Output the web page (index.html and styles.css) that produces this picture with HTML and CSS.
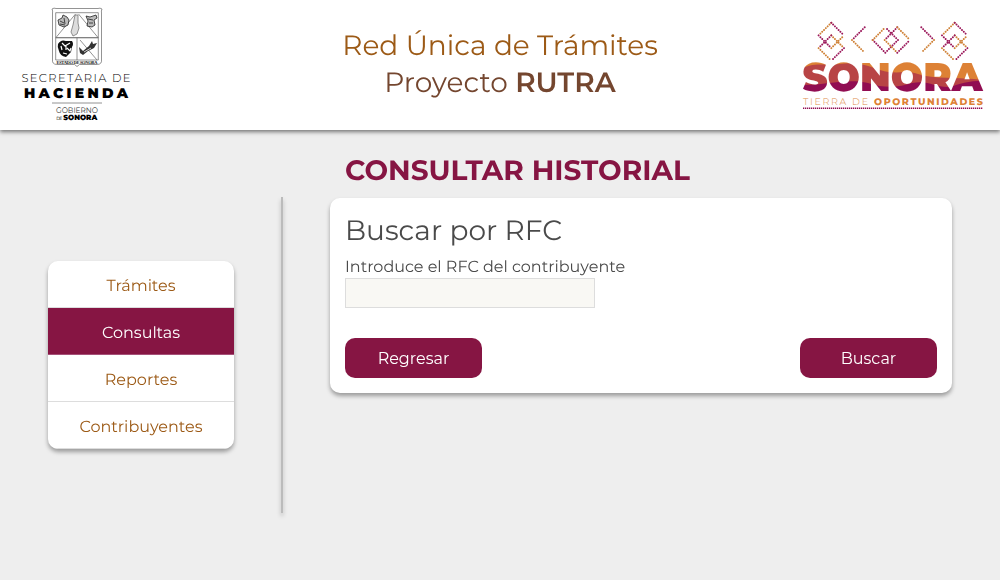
FILE: index.html
```html
<!DOCTYPE html>
<html lang="es">
<head>
<meta charset="utf-8">
<title>Red Única de Trámites</title>
<link rel="stylesheet" href="styles.css">
</head>
<body>
<header class="header">
  <svg class="logo-hacienda" viewBox="0 0 124 124" role="img" aria-label="Secretaria de Hacienda">
    <g fill="none" stroke="#666" stroke-width=".7">
      <path d="M42 9q2 -1.500 4 -.5h42q2 -1 4 .5q-1 2 -.5 4v47q.5 4 -4 4.500h-18l-2.500 2l-2.500 -2h-18q-4.500 -.5 -4 -4.500v-47q.5 -2 -.5 -4z"/>
      <path d="M45.700 12.700h42.600v25H45.700zM45.700 37.700h42.600V60H45.700zM46 37.500L65.500 14M88 37.500L68.500 14M67 37.700V60M70 40L87 60"/>
    </g>
    <g fill="#bbb" stroke="#222" stroke-width=".8">
      <path d="M48 20l4 -2l1 -3l4 2l2 3l-1 5l-4 2l-5 -2zM50 21l4 2M54 18l1 6M50 24l5 1"/>
      <path d="M76 16l4 1l6 -2l1 3l-3 2l1 5l-3 2l-5 -1l1 -5zM78 19l5 1M79 23h4"/>
      <path d="M65 15h3v8l1 5l-2 6l-4 2l-2 -4l2 -7z" fill="#ddd" stroke="#777"/>
    </g>
    <path d="M48 44q3 -5 8 -3l6 0q2 3 0 6l-1 5l-5 5q-6 -1 -7 -6q-2 -4 -1 -7z" fill="#111"/>
    <path d="M52 43l3 3l5 -3M57 48l3 3l1 -3M51 46l1 4M53 53l4 1M56 46l0 4" fill="none" stroke="#fff" stroke-width="1.200"/>
    <path d="M69 47l4 4l6 -5l3 -5l1 3l4 -1l-3 5l-6 3l-5 4l-3 -2z" fill="#333"/>
    <path d="M74 52l7 -4" stroke="#ccc"/>
    <g text-anchor="middle">
      <text class="crest-label" x="67" y="64.300" textLength="41">ESTADO DE SONORA</text>
      <text class="org-light" x="66" y="82" textLength="109">SECRETARIA DE</text>
      <text class="org-bold" x="66" y="98" textLength="104">HACIENDA</text>
      <text class="gov-light" x="67" y="112.700" textLength="42" lengthAdjust="spacingAndGlyphs">GOBIERNO</text>
      <text class="gov-de" x="49.300" y="119.800" textLength="6">DE</text>
      <text class="gov-bold" x="70.300" y="120" textLength="34" lengthAdjust="spacingAndGlyphs">SONORA</text>
    </g>
    <path d="M42 103h50" stroke="#777" stroke-width=".8"/>
  </svg>

  <div class="titles">
    <h1 class="title-main">Red Única de Trámites</h1>
    <p class="title-sub">Proyecto <strong>RUTRA</strong></p>
  </div>

  <svg class="logo-sonora" viewBox="800 15 186 98" role="img" aria-label="Sonora, tierra de oportunidades">
    <defs>
      <clipPath id="word"><text class="sonora" x="802.500" y="91.300" textLength="180" lengthAdjust="spacingAndGlyphs">SONORA</text></clipPath>
      <g id="rhombi">
        <path class="bead orange" d="M0 0L-12.700 12.700M0 25.400L12.700 12.700M0 12.700L12.700 25.400M-12.700 25.400L0 38"/>
        <path class="bead wine" d="M0 0L12.700 12.700M-12.700 12.700L0 25.400M0 12.700L-12.700 25.400M12.700 25.400L0 38"/>
      </g>
    </defs>
    <use href="#rhombi" transform="translate(831.300 22.700)"/>
    <use href="#rhombi" transform="translate(954.700 22.700)"/>
    <path class="bead wine" d="M864.700 27.300L852 40M885.300 52.700L898 40L885.300 27.300M872.700 40L885.300 52.700M921.300 27.300L934 40M897.300 27.300L884.700 40M897.300 52.700L910 40"/>
    <path class="bead orange" d="M852 40L864.700 52.700M872.700 40L885.300 27.300M934 40L921.300 52.700M897.300 27.300L910 40M884.700 40L897.300 52.700"/>
    <g clip-path="url(#word)">
      <path fill="#dd8135" d="M800 58h190v38h-190z"/>
      <path fill="#b84445" d="M800 69C815 62 825 66 840 64C855 62 866 65 880 70C895 75 905 70 918 74C935 80 960 76 990 81V96H800z"/>
      <path fill="#910d52" d="M800 85C825 86 845 78 868 83C885 89 900 87 912 83C930 80 935 88 950 87C960 84 970 80 990 81V96H800z"/>
    </g>
    <text class="tag-light" x="803" y="105.300" textLength="65">TIERRA DE</text>
    <text class="tag-bold" x="874" y="105.300" textLength="109">OPORTUNIDADES</text>
    <path d="M803 108.300h180" stroke="#910d52" stroke-width="1.400" stroke-dasharray="1.300 .7"/>
  </svg>
</header>

<main class="layout">
  <aside class="sidebar">
    <nav class="menu">
      <a class="menu-item">Trámites</a>
      <a class="menu-item active">Consultas</a>
      <a class="menu-item">Reportes</a>
      <a class="menu-item">Contribuyentes</a>
    </nav>
  </aside>
  <div class="divider"></div>
  <section class="content">
    <h2 class="page-title">CONSULTAR HISTORIAL</h2>
    <form class="card">
      <h3 class="card-title">Buscar por RFC</h3>
      <label class="label" for="rfc">Introduce el RFC del contribuyente</label>
      <input class="field" id="rfc" type="text">
      <div class="actions">
        <button class="btn" type="button">Regresar</button>
        <button class="btn" type="button">Buscar</button>
      </div>
    </form>
  </section>
</main>
</body>
</html>
```

FILE: styles.css
```css
* { box-sizing: border-box; }
body {
  margin: 0;
  height: 580px;
  overflow: hidden;
  background: #eee;
  color: #4a4a4a;
  font-family: Montserrat, Inter, sans-serif;
  font-size: 16px;
  font-weight: 400;
  text-rendering: geometricPrecision;
}
h1, h2, h3, p { margin: 0; font-weight: inherit; }
.titles, .menu, .page-title, .card { will-change: transform; }
.header {
  height: 130px;
  display: flex;
  background: #fff;
  box-shadow: 0 2px 4px rgba(0, 0, 0, .5);
}
.logo-hacienda { width: 124px; height: 124px; margin-left: 10px; flex: none; }
.titles { flex: 1; padding: 28px 0 0 66px; text-align: center; white-space: nowrap; }
.title-main, .title-sub { font-size: 28px; line-height: 37px; }
.title-main { color: #9c5a16; }
.title-sub { color: #74462f; }
.title-sub strong { font-weight: 600; }
.logo-sonora { width: 186px; height: 98px; margin: 15px 14px 0 0; flex: none; }

.layout { display: flex; height: 450px; }
.sidebar { width: 281px; padding: 131px 47px 0 48px; }
.menu { border-radius: 10px; overflow: hidden; background: #fff; box-shadow: 0 3px 4px rgba(0, 0, 0, .35); }
.menu-item {
  display: block;
  height: 47px;
  padding-top: 2px;
  line-height: 47px;
  border-bottom: 1px solid #ddd;
  text-align: center;
  color: #9c5a16;
}
.menu-item.active { background: #861543; color: #fff; border-bottom-color: #a65078; }
.divider { width: 2px; height: 316px; margin-top: 67px; background: #bbb; box-shadow: 0 3px 4px rgba(0, 0, 0, .25); }
.content { width: 622px; margin-left: 47px; padding-top: 20px; }
.page-title { height: 48px; padding: 1px 0 0 15px; line-height: 40px; font-size: 28px; font-weight: 700; color: #861543; white-space: nowrap; }
.card { height: 195px; padding: 16px 15px 15px; display: flex; flex-direction: column; align-items: flex-start; background: #fff; border-radius: 10px; box-shadow: 0 3px 4px rgba(0, 0, 0, .35); }
.card-title { height: 44px; line-height: 35px; font-size: 28px; }
.label { height: 20px; line-height: 20px; white-space: nowrap; }
.field { width: 250px; height: 30px; border: 1px solid #ddd; background: #f9f8f4; }
.actions { width: 100%; margin-top: 30px; display: flex; justify-content: space-between; }
.btn { width: 137px; height: 40px; padding: 2px 0 0; border: 0; border-radius: 10px; background: #861543; color: #fff; font: inherit; line-height: 38px; }

text { font-family: Montserrat, Inter, sans-serif; }
.crest-label { font: 700 4.5px "Liberation Serif", serif; fill: #222; }
.org-light { font-size: 11.5px; font-weight: 300; }
.org-bold { font-size: 14px; font-weight: 900; }
.gov-light { font-size: 8px; font-weight: 400; fill: #333; }
.gov-de { font-size: 4.5px; }
.gov-bold { font-size: 7.5px; font-weight: 900; }
.bead { fill: none; stroke-width: 2; stroke-linecap: round; stroke-dasharray: .01 2.56; }
.orange { stroke: #cf8238; }
.wine { stroke: #9c1a5c; }
.sonora { font-size: 40px; font-weight: 900; }
.tag-light { font-size: 9.5px; font-weight: 300; fill: #dd8b48; }
.tag-bold { font-size: 9.5px; font-weight: 800; fill: #dd8135; }
```
